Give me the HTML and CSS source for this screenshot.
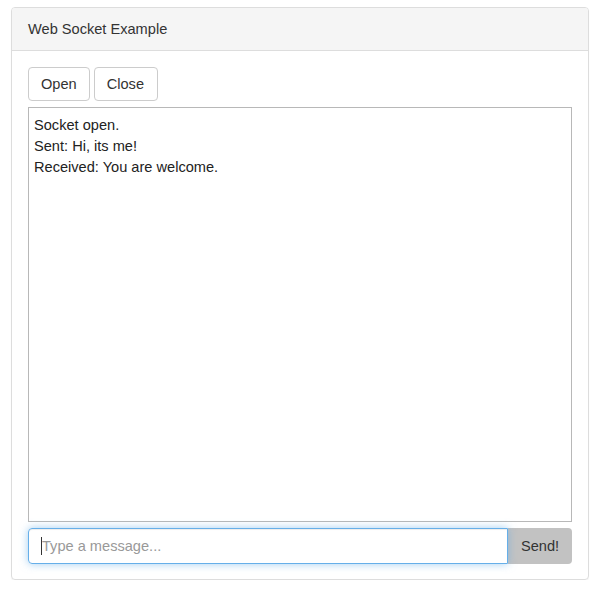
FILE: index.html
```html
<!DOCTYPE html>
<html>
<head>
<meta charset="utf-8">
<link rel="stylesheet" href="styles.css">
</head>
<body>
<div class="panel">
  <div class="panel-heading">Web Socket Example</div>
  <div class="panel-body">
    <div class="btn-row">
      <button class="btn">Open</button>
      <button class="btn btn-close">Close</button>
    </div>
    <div class="log">Socket open.<br>Sent: Hi, its me!<br>Received: You are welcome.</div>
    <div class="input-group">
      <div class="input"><span class="caret"></span><span class="placeholder">Type a message...</span></div>
      <button class="send">Send!</button>
    </div>
  </div>
</div>
</body>
</html>
```
FILE: styles.css
```css
html, body {
  margin: 0;
  padding: 0;
  background: #fff;
}
body {
  padding: 7px 11px 0 11px;
  font-family: "Liberation Sans", Arial, sans-serif;
  font-size: 14.6px;
  color: #333;
}
.panel {
  width: 576px;
  border: 1px solid #ddd;
  border-radius: 4px;
  box-shadow: 0 1px 1px rgba(0,0,0,0.05);
}
.panel-heading {
  background: #f5f5f5;
  border-bottom: 1px solid #ddd;
  border-radius: 3px 3px 0 0;
  padding: 10px 16px;
  line-height: 22px;
  color: #333;
}
.panel-body {
  padding: 16px 16px 15px 16px;
  display: flex;
  flex-direction: column;
}
.btn-row {
  display: flex;
  gap: 4px;
}
.btn {
  font-family: inherit;
  font-size: 14.6px;
  line-height: 20px;
  color: #333;
  background: #fff;
  border: 1px solid #ccc;
  border-radius: 4px;
  padding: 6px 12px;
  height: 34px;
}
.btn-close {
  padding: 6px 13px 6px 12px;
}
.log {
  margin-top: 6px;
  border: 1px solid #b8b8b8;
  padding: 7px 5px 4px 5px;
  line-height: 21px;
  font-size: 14.6px;
  color: #222;
  box-sizing: border-box;
  height: 415px;
}
.input-group {
  margin-top: 6px;
  display: flex;
  height: 36px;
}
.input {
  flex: 1;
  border: 1px solid #66afe9;
  border-radius: 4px 0 0 4px;
  box-shadow: inset 0 1px 1px rgba(0,0,0,.075), 0 0 8px rgba(102,175,233,.6);
  display: flex;
  align-items: center;
  padding-left: 12px;
  position: relative;
  z-index: 1;
}
.caret {
  display: inline-block;
  width: 1px;
  height: 18px;
  background: #333;
}
.placeholder {
  color: #999;
  font-size: 14.6px;
}
.send {
  width: 64px;
  font-family: inherit;
  font-size: 14.6px;
  color: #333;
  background: #c2c2c2;
  border: none;
  border-radius: 0 4px 4px 0;
  padding: 0;
}
```
